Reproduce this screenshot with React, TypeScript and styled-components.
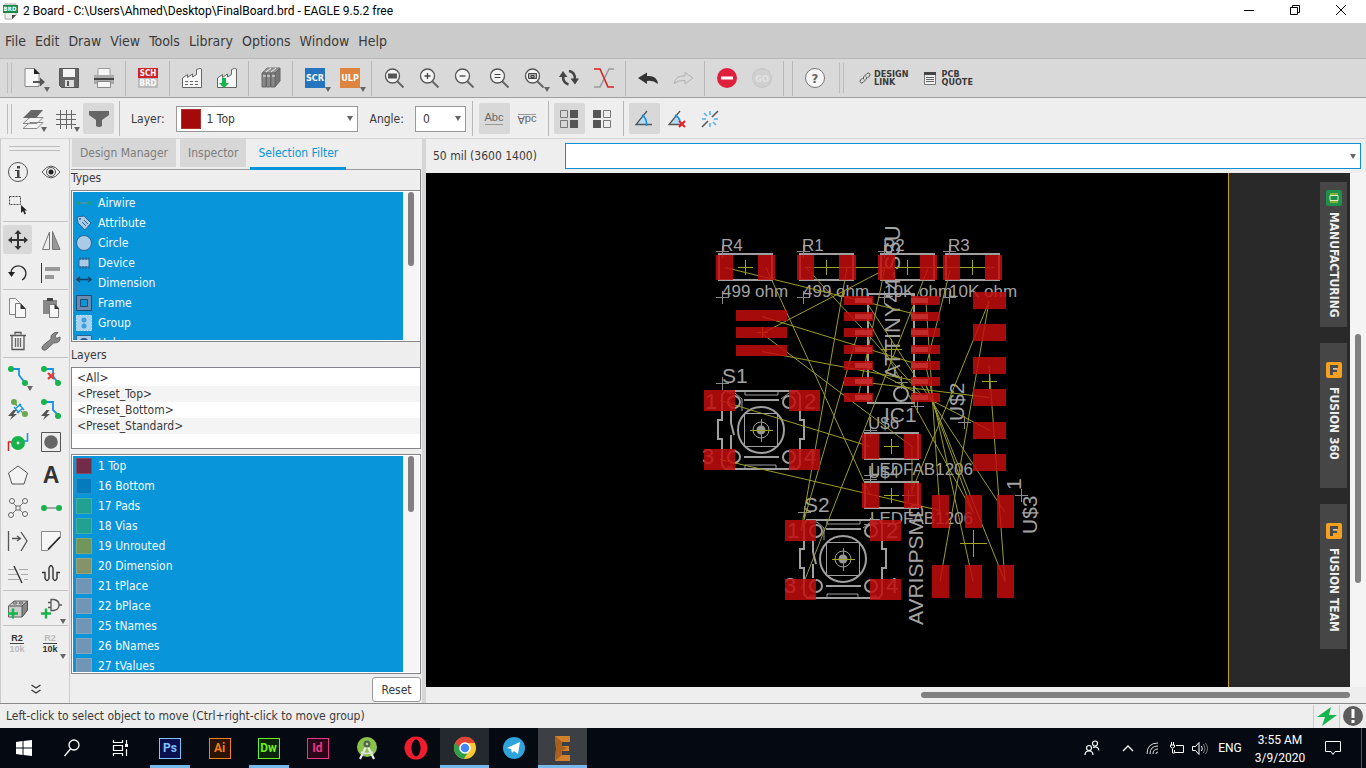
import React from "react";
import styled, { createGlobalStyle } from "styled-components";

const UI = '"DejaVu Sans Condensed", "DejaVu Sans", sans-serif';
const WIN = 'Roboto, "Noto Sans", sans-serif';

const Global = createGlobalStyle`
  * { box-sizing: border-box; }
  body { margin: 0; background: #eee; font-family: ${UI}; font-size: 12px; color: #3a3a3a; overflow: hidden; }
  button, input, select { font: inherit; color: inherit; }
  svg { display: block; flex: none; }
`;

/* ---------- icons (24 x 24 grid) ---------- */

const magnifier = (inner: React.ReactNode) => (
  <>
    <path d="M15.5 15.5 21.5 21.5" stroke="#666" strokeWidth="2" />
    <circle cx="10.5" cy="10" r="7" fill="#f4f4f4" stroke="#555" strokeWidth="1.3" />
    {inner}
  </>
);

const factory = (extra: React.ReactNode) => (
  <>
    <path d="M2.5 21.5V12l5-3.500v3l5-3.500v3l4-2.500V3.500q4-2 5-.500V21.500Z" fill="#f6f6f6" stroke="#666" />
    {extra}
  </>
);

const dot = (x: number, y: number, c = "#17b34b") => <circle cx={x} cy={y} r="3" fill={c} />;

const bolt = <path d="M7.5 13 2 19h4l-2 4 7-6H7.500l3-4Z" fill="#555" />;

const valueText = (top: string, bottom: string) => (
  <>
    <text x="11" y="9" fontSize="9" fontWeight="700" textAnchor="middle" fill={top} fontFamily="Liberation Sans, sans-serif">R2</text>
    <path d="M4 11.5h14" stroke="#444" />
    <text x="11" y="20" fontSize="9" fontWeight="700" textAnchor="middle" fill={bottom} fontFamily="Liberation Sans, sans-serif">10k</text>
  </>
);

const icons: Record<string, React.ReactNode> = {
  open: (
    <>
      <path d="M3 2.5h9l5 5v13H3Z" fill="#f6f6f6" stroke="#888" />
      <path d="M12 2v6h6Z" fill="#222" />
      <path d="M11 15h7v-3.500l5 4.500-5 4.500V17h-7Z" fill="#555" />
    </>
  ),
  save: (
    <>
      <path d="M2.5 2.5h19v19h-17l-2-2Z" fill="#666" stroke="#555" />
      <path d="M6 3h12v8H6Z" fill="#f4f4f4" />
      <path d="M8 14h9v7H8Z" fill="#ddd" />
      <path d="M10 15h2v5h-2Z" fill="#555" />
    </>
  ),
  print: (
    <>
      <path d="M6 2.5h12v7H6Z" fill="#f6f6f6" stroke="#999" />
      <path d="M2 9h20v9H2Z" fill="#aaa" />
      <path d="M2 12h20v2H2Z" fill="#444" />
      <path d="M5.500 15.500h13v6h-13Z" fill="#f6f6f6" stroke="#888" />
    </>
  ),
  sch: (
    <>
      <path d="M2 2h20v10H2Z" fill="#cf2127" />
      <path d="M2 12h20v10H2Z" fill="#bbb" />
      <text x="12" y="10" fontSize="8" fontWeight="700" textAnchor="middle" fill="#fff" fontFamily={UI}>SCH</text>
      <text x="12" y="20" fontSize="8" fontWeight="700" textAnchor="middle" fill="#fff" fontFamily={UI}>BRD</text>
    </>
  ),
  factory: factory(<path d="M5 15.5h13M5 18.5h13" stroke="#666" strokeDasharray="3 2" />),
  factoryDown: factory(<path d="M7 12h4v5h3l-5 5-5-5h3Z" fill="#17b34b" />),
  books: (
    <>
      <path d="M3 7 8 2h13l-5 5Z" fill="#999" stroke="#777" />
      <path d="M16 7l5-5v13l-5 6Z" fill="#777" stroke="#666" />
      <path d="M3 7h4v14H3ZM7.5 7h4v14h-4ZM12 7h4v14h-4Z" fill="#888" stroke="#666" />
      <path d="M4 10h3M8 10h3M13 10h3M7 6l5-4M12 6l5-4" stroke="#eee" />
    </>
  ),
  scr: (
    <>
      <path d="M2 2h20v20H2Z" fill="#2673c0" />
      <text x="12" y="15" fontSize="9" fontWeight="700" textAnchor="middle" fill="#fff" fontFamily={UI}>SCR</text>
    </>
  ),
  ulp: (
    <>
      <path d="M2 2h20v20H2Z" fill="#dd8440" />
      <text x="12" y="15" fontSize="9" fontWeight="700" textAnchor="middle" fill="#fff" fontFamily={UI}>ULP</text>
    </>
  ),
  zoomFit: magnifier(<path d="M6 7.5h9v5H6Z" fill="#555" />),
  zoomIn: magnifier(<path d="M7.5 10h6M10.5 7v6" stroke="#444" strokeWidth="1.3" />),
  zoomOut: magnifier(<path d="M7.5 10h6" stroke="#444" strokeWidth="1.3" />),
  zoomEq: magnifier(<path d="M7.5 8.500h6M7.500 11.500h6" stroke="#444" />),
  zoomSel: magnifier(<path d="M6.5 7.500h8v5h-8ZM9 9.500h3v2H9Z" fill="#aaa" stroke="#444" />),
  refresh: (
    <>
      <path d="M6 10q0 7 5.500 8.500M18 13q0-7-6-8" fill="none" stroke="#444" strokeWidth="2.6" />
      <path d="M2 11l4-6 4.500 6ZM13.500 12.500H22l-4 6Z" fill="#444" />
    </>
  ),
  ratsnest: (
    <>
      <path d="M22 3h-5L8 21H2" fill="none" stroke="#999" strokeWidth="1.6" />
      <path d="M2 3h6l8 18h6" fill="none" stroke="#d8241f" strokeWidth="1.6" />
    </>
  ),
  undo: <path d="M2 12l9-5.500v3.500q10-1 11 8-5-4-11-3v3Z" fill="#333" />,
  redo: <path d="M22 12l-8-5.500v3.500Q5 9 3 17.500 7 14 14 14.500v3.500Z" fill="none" stroke="#b0b0b0" />,
  stop: (
    <>
      <circle cx="12" cy="12" r="10" fill="#e01f3d" />
      <path d="M6 10.5h12v3H6Z" fill="#fff" />
    </>
  ),
  go: (
    <>
      <circle cx="12" cy="12" r="9.5" fill="#d0d0d0" stroke="#c5c5c5" />
      <text x="12" y="15.5" fontSize="9" fontWeight="700" textAnchor="middle" fill="#e2e2e2" fontFamily={UI}>GO</text>
    </>
  ),
  help: (
    <>
      <circle cx="12" cy="12" r="9.5" fill="#f5f5f5" stroke="#777" />
      <text x="12" y="17" fontSize="13" fontWeight="700" textAnchor="middle" fill="#666" fontFamily={UI}>?</text>
    </>
  ),
  layers: (
    <>
      <path d="M2 21.500l7-6h13l-6 6ZM2 16.500l7-6h13l-6 6Z" fill="#f4f4f4" stroke="#888" />
      <path d="M2 11l8-8h12l-7 8Z" fill="#666" />
    </>
  ),
  grid: <path d="M6.5 3v19M12.5 3v19M17.5 3v19M2 7.500h20M2 12.500h20M2 17.500h20" stroke="#666" />,
  filter: <path d="M2 4h20v4l-7 5v6q-3 2-6 0v-6L2 8Z" fill="#666" />,
  abc: (
    <>
      <text x="12" y="14" fontSize="11" textAnchor="middle" fill="#666" fontFamily="Liberation Sans, sans-serif">Abc</text>
      <path d="M3 17.5h18" stroke="#999" />
    </>
  ),
  abcFlip: (
    <>
      <text x="12" y="-9" transform="scale(1 -1)" fontSize="11" textAnchor="middle" fill="#666" fontFamily="Liberation Sans, sans-serif">Abc</text>
      <path d="M3 7.5h18" stroke="#999" />
    </>
  ),
  dotsRight: (
    <>
      <path d="M3.5 3.500h7v7h-7ZM3.500 13.500h7v7h-7Z" fill="none" stroke="#777" />
      <path d="M13 3h8v8h-8ZM13 13h8v8h-8Z" fill="#555" />
    </>
  ),
  dotsLeft: (
    <>
      <path d="M13.5 3.500h7v7h-7ZM13.500 13.500h7v7h-7Z" fill="none" stroke="#777" />
      <path d="M3 3h8v8H3ZM3 13h8v8H3Z" fill="#555" />
    </>
  ),
  angle: (
    <>
      <path d="M4 17 12 8q4 4 3 9Z" fill="#b5dcf6" />
      <path d="M20 17.500H4L15 4" fill="none" stroke="#555" strokeWidth="1.3" />
      <path d="M10 8q5 3 4.500 11" fill="none" stroke="#1492e6" strokeWidth="1.6" />
    </>
  ),
  angleOff: (
    <>
      <path d="M4 17 11 8q4 4 3 9Z" fill="#b5dcf6" />
      <path d="M16 17.500H4L15 4" fill="none" stroke="#555" strokeWidth="1.3" />
      <path d="M10 8q4 2 5 6" fill="none" stroke="#1492e6" strokeWidth="1.5" />
      <path d="m14 14 6 6m0-6-6 6" stroke="#e31e24" strokeWidth="2" />
    </>
  ),
  spark: (
    <>
      <path d="M4 20l6-6M14 10l6-6" stroke="#555" strokeWidth="1.5" />
      <path d="M12 4v4M12 16v4M4 12h4M16 12h4M6 6l3 3M15 15l3 3" stroke="#4fb1ee" strokeWidth="1.5" />
    </>
  ),
  info: (
    <>
      <circle cx="12" cy="12" r="9.5" fill="none" stroke="#555" />
      <path d="M11 6h3v2.500h-3ZM9 10h4.500v7H15v1H9v-1h2v-6H9Z" fill="#444" />
    </>
  ),
  eye: (
    <>
      <path d="M3 12q9-12 18 0-9 12-18 0Z" fill="none" stroke="#555" />
      <circle cx="12" cy="12" r="4.5" fill="none" stroke="#555" />
      <circle cx="12" cy="12" r="2.5" fill="#222" />
    </>
  ),
  group: (
    <>
      <path d="M3.5 3.500h11v8h-11Z" fill="none" stroke="#444" strokeDasharray="2 1" />
      <path d="M15 12v8l2-2 1.500 3.500 1.500-1-1.500-3H21Z" fill="#222" />
    </>
  ),
  move: <path d="M12 2l3.500 4H13v5h5V8.500l4 3.500-4 3.500V13h-5v5h2.500L12 22l-3.500-4H11v-5H6v2.500L2 12l4-3.500V11h5V6H8.500Z" fill="#333" />,
  mirror: (
    <>
      <path d="M3.5 21.500 10.500 4v17.500Z" fill="none" stroke="#777" />
      <path d="M13.500 21.500V3.500l7.500 18Z" fill="#999" stroke="#777" />
    </>
  ),
  rotate: (
    <>
      <path d="M5 11a7.5 7.5 0 1 1 11 8" fill="none" stroke="#333" strokeWidth="1.4" />
      <path d="M2 11h7l-3.500 5Z" fill="#222" />
    </>
  ),
  align: (
    <>
      <path d="M2.5 2v20" stroke="#333" />
      <path d="M6 6h15v4H6ZM6 14h9v4H6Z" fill="#999" />
    </>
  ),
  copy: (
    <>
      <path d="M3.5 2.500h6l4 4v12h-10Z" fill="#f6f6f6" stroke="#888" />
      <path d="M9.5 7.500h5l5 5v9h-10Z" fill="#f6f6f6" stroke="#777" />
      <path d="M14.5 7v6h5Z" fill="#333" />
    </>
  ),
  paste: (
    <>
      <path d="M4 4h14v14H4Z" fill="#888" />
      <path d="M8 2h6v3H8Z" fill="#444" />
      <path d="M10.5 8.500h6l3 4v9h-9Z" fill="#f6f6f6" stroke="#777" />
      <path d="M15.5 8v5h5Z" fill="#333" />
    </>
  ),
  trash: (
    <>
      <path d="M4 6.500h16M9 5.500V3.500h6v2M6 7v13.500h12V7" fill="none" stroke="#555" strokeWidth="1.3" />
      <path d="M9.500 9v9M12 9v9M14.500 9v9" stroke="#666" strokeWidth="1.3" />
    </>
  ),
  wrench: <path d="M3.5 20.500q-1.500-2 .5-4l8-6.500q-1-4 3-6 2-1 4-.5l-3 3.500 1.500 2.500L21 8q1 6-6.500 6l-7 6.500q-2 1.500-4 0Z" fill="#888" stroke="#666" />,
  route: <><path d="M5 5h8v6l6 8" fill="none" stroke="#1492e6" strokeWidth="1.8" />{dot(5, 5)}{dot(19, 19)}</>,
  ripup: (
    <>
      <path d="M5 5h9v7l5 7" fill="none" stroke="#1492e6" strokeWidth="1.8" />{dot(5, 5)}{dot(19, 19)}
      <path d="m9 9 6 6m0-6-6 6" stroke="#e53935" strokeWidth="2.2" />
    </>
  ),
  multi: (
    <>
      <path d="m8 5 3 4M15 14l4 4" stroke="#6aa84f" strokeWidth="1.5" />
      <path d="M9 12l6-5M11 16l6-5M8 10l5 6M13 7l5 6" stroke="#1492e6" strokeWidth="1.3" />
      {dot(8, 5, "#6aa84f")}{dot(19, 17, "#6aa84f")}{bolt}
    </>
  ),
  autoroute: <><path d="M5 5h9v8l5 5" fill="none" stroke="#1492e6" strokeWidth="1.8" />{dot(5, 5)}{dot(19, 19)}{bolt}</>,
  via: (
    <>
      <path d="M2.500 21V12H9" fill="none" stroke="#c62828" strokeWidth="1.5" />
      <path d="M21.500 3v8H15" fill="none" stroke="#1492e6" strokeWidth="1.5" />
      <circle cx="12" cy="13" r="4.2" fill="none" stroke="#17b34b" strokeWidth="5.6" />
    </>
  ),
  hole: (
    <>
      <path d="M2.5 2.500h19v19h-19Z" fill="none" stroke="#555" />
      <circle cx="12" cy="12" r="6.800" fill="#666" />
    </>
  ),
  polygon: <path d="M12 3l9.500 7-3.500 11H6L2.500 10Z" fill="#f4f4f4" stroke="#555" />,
  text: <text x="12" y="20" fontSize="23" fontWeight="700" textAnchor="middle" fill="#333" fontFamily="Liberation Sans, sans-serif">A</text>,
  net: (
    <>
      <path d="M5 5l14 14M5 19 19 5" stroke="#777" />
      {[[6, 5], [19, 5], [5, 19], [19, 18]].map(([x, y]) => <circle key={`${x}-${y}`} cx={x} cy={y} r="2.5" fill="#f4f4f4" stroke="#666" />)}
      <path d="M10 10h4v4h-4Z" fill="#f4f4f4" stroke="#666" />
    </>
  ),
  wire: <><path d="M4 12h16" stroke="#888" strokeWidth="1.5" />{dot(5, 12)}{dot(20, 12)}</>,
  split: <path d="M2.5 2v20M6 9.500h8M11 7l3.500 2.500L11 12M15 3l6 9-6 10" fill="none" stroke="#555" strokeWidth="1.3" />,
  miter: (
    <>
      <path d="M2.500 2.500h19V8L9 21.500H2.500Z" fill="#f6f6f6" stroke="#888" />
      <path d="M21 8 9 20.500" stroke="#222" strokeWidth="1.6" />
    </>
  ),
  slice: <><path d="M2 7.500h7M2 12.500h9M2 17.500h11M13 7.500h9M15 12.500h7M18 17.500h4" stroke="#aaa" /><path d="m8 4 8 17" stroke="#333" strokeWidth="1.4" /></>,
  meander: <path d="M3 10.500h3v6q2 4 4 0V6q2-5 4 0v10.500q2 4 4 0v-6h3" fill="none" stroke="#333" strokeWidth="1.4" />,
  addPart: (
    <>
      <path d="M2.5 9 8 4h13.500v9L16 20H2.500Z" fill="#ccc" stroke="#666" />
      <path d="M16 9l5.500-5v9L16 20ZM2.500 9H16" fill="#888" stroke="#555" />
      <ellipse cx="9" cy="6" rx="2" ry="1" fill="#eee" stroke="#555" /><ellipse cx="15" cy="6" rx="2" ry="1" fill="#eee" stroke="#555" />
      <path d="M2 16.500h10M7 11.500v10" stroke="#17b34b" strokeWidth="2.4" />
    </>
  ),
  addGate: (
    <>
      <path d="M12 2.500h3q5 1 5 5.500t-5 5.500h-3ZM9 5.500h3M9 10.500h3M20 8h3" fill="none" stroke="#555" strokeWidth="1.3" />
      <path d="M2 16.500h10M7 11.500v10" stroke="#17b34b" strokeWidth="2.4" />
    </>
  ),
  value: valueText("#333", "#bbb"),
  valueAlt: valueText("#bbb", "#333"),
};

const Icon = ({ name, size = 24 }: { name: string; size?: number }) => (
  <svg width={size} height={size} viewBox="0 0 24 24" aria-hidden="true">{icons[name]}</svg>
);

/* ---------- window frame ---------- */

const Shell = styled.div`
  height: 100vh;
  display: flex;
  flex-direction: column;
`;
const TitleBar = styled.header`
  flex: none;
  height: 23px;
  padding: 0 2px 0 1px;
  display: flex;
  align-items: center;
  background: #fff;
  color: #000;
  font: 12px/23px ${WIN};
`;
const Title = styled.h1`
  margin: 0 auto 0 5px;
  font: inherit;
`;
const WindowButton = styled.button`
  width: 46px;
  height: 23px;
  padding: 0 0 3px;
  border: 0;
  background: none;
  display: grid;
  place-items: center;
`;
const MenuBar = styled.nav`
  flex: none;
  height: 36px;
  padding-left: 5px;
  display: flex;
  align-items: center;
  gap: 9px;
  background: #cbcbcb;
  border-bottom: 1px solid #b7b7b7;
`;
const MenuItem = styled.button`
  border: 0;
  padding: 0;
  background: none;
  font-size: 14px;
`;

/* ---------- toolbars ---------- */

const MainTools = styled.div`
  flex: none;
  height: 39px;
  display: flex;
  align-items: center;
  background: #d9d9d9;
  border-bottom: 1px solid #9d9d9d;
`;
const OptionTools = styled.div`
  flex: none;
  height: 41px;
  padding-top: 1px;
  display: flex;
  align-items: center;
  gap: 2px;
  border-bottom: 1px solid #d4d4d4;
`;
const Handle = styled.span<{ $after: number }>`
  width: 5px;
  height: 30px;
  margin: 0 ${(p) => p.$after}px 0 7px;
  border: solid #bdbdbd;
  border-width: 0 1px;
`;
const Rule = styled.span<{ $w?: number }>`
  width: ${(p) => p.$w ?? 9}px;
  height: 35px;
  display: flex;
  justify-content: center;
  &::before { content: ""; width: 1px; background: #b8b8b8; }
`;
const ToolButton = styled.button<{ $w?: number; $on?: boolean; $menu?: boolean }>`
  position: relative;
  flex: none;
  width: ${(p) => p.$w ?? 35}px;
  height: 31px;
  padding: 0;
  border: 0;
  border-radius: 2px;
  background: ${(p) => (p.$on ? "#d8d8d8" : "none")};
  display: grid;
  place-items: center;
  &::after {
    content: "";
    display: ${(p) => (p.$menu ? "block" : "none")};
    position: absolute;
    right: 1px;
    bottom: 2px;
    border: 3px solid transparent;
    border-top: 5px solid #666;
    border-bottom: 0;
  }
`;
const LinkTool = styled.button`
  margin-left: 15px;
  padding: 0;
  border: 0;
  background: none;
  display: flex;
  align-items: center;
  gap: 3px;
  font-size: 9px;
  line-height: 8px;
  font-weight: 600;
  text-align: left;
`;
const FieldLabel = styled.label<{ $l: number; $r: number }>`
  margin: 0 ${(p) => p.$r}px 0 ${(p) => p.$l}px;
`;
const SelectBox = styled.div<{ $w: number }>`
  flex: none;
  width: ${(p) => p.$w}px;
  height: 26px;
  padding: 0 4px;
  display: flex;
  align-items: center;
  background: #fff;
  border: 1px solid #999;
  select { flex: 1; min-width: 0; height: 24px; padding: 0 0 0 3px; border: 0; background: none; appearance: none; outline: 0; }
  span + select { padding-left: 6px; }
`;
const Swatch = styled.span<{ $c: string; $size?: number }>`
  flex: none;
  width: ${(p) => p.$size ?? 16}px;
  height: ${(p) => p.$size ?? 16}px;
  background: ${(p) => p.$c};
  border: 1px solid rgba(255, 255, 255, 0.15);
`;
const Caret = styled.span`
  flex: none;
  border: 3px solid transparent;
  border-top: 5px solid #666;
  border-bottom: 0;
`;

/* ---------- left tool column and filter panel ---------- */

const Body = styled.main`
  flex: 1;
  min-height: 0;
  display: flex;
`;
const ToolColumn = styled.aside`
  flex: none;
  width: 70px;
  padding: 7px 1px 0 2px;
  border-left: 1px solid #ccc;
  border-right: 1px solid #ccc;
  display: flex;
  flex-direction: column;
`;
const ColumnHandle = styled.span`
  height: 5px;
  margin: 0 8px 4px 6px;
  border: solid #bdbdbd;
  border-width: 1px 0;
`;
const ToolGroup = styled.div`
  display: grid;
  grid-template-columns: 33px 33px;
  grid-auto-rows: 33px;
  & + & { border-top: 1px solid #c4c4c4; padding-top: 1px; }
`;
const PadButton = styled(ToolButton)`
  width: 29px;
  height: 29px;
  margin: 2px 0;
  &::after { right: -1px; bottom: -1px; }
`;
const More = styled.button`
  margin: auto 0 8px;
  padding: 0;
  border: 0;
  background: none;
  display: grid;
  place-items: center;
`;
const Panel = styled.section`
  flex: none;
  width: 352px;
  padding: 0 1px;
  display: flex;
  flex-direction: column;
`;
const Tabs = styled.div`
  flex: none;
  height: 31px;
  padding-left: 1px;
  display: flex;
  gap: 4px;
  border-bottom: 1px solid #999;
`;
const Tab = styled.button<{ $on?: boolean }>`
  height: 31px;
  padding: 0 8px;
  border: 0;
  border-bottom: 3px solid ${(p) => (p.$on ? "#0895d9" : "transparent")};
  background: ${(p) => (p.$on ? "#eee" : "#d7d7d7")};
  background-clip: padding-box;
  color: ${(p) => (p.$on ? "#0895d9" : "#7d7d7d")};
`;
const Caption = styled.h2<{ $h: number }>`
  flex: none;
  height: ${(p) => p.$h}px;
  margin: 0;
  font: 12px/17px ${UI};
  padding-top: ${(p) => (p.$h > 20 ? 5 : 0)}px;
  border-right: 1px solid #888;
`;
const ListFrame = styled.div<{ $grow: number }>`
  flex: ${(p) => p.$grow} 1 0;
  min-height: 0;
  padding: 1px;
  display: flex;
  background: #fff;
  border: 1px solid #85868c;
`;
const BlueList = styled.ul`
  flex: 1;
  margin: 0;
  padding: 0;
  list-style: none;
  overflow: hidden;
  background: #0895d9;
  color: #f4faff;
`;
const BlueItem = styled.li`
  height: 20px;
  padding: 1px 0 0 3px;
  display: flex;
  align-items: center;
  gap: 6px;
`;
const Track = styled.div`
  width: 16px;
  padding-left: 5px;
  background: #f5f5f5;
`;
const Thumb = styled.div<{ $h: string }>`
  width: 6px;
  height: ${(p) => p.$h};
  border-radius: 3px;
  background: #808080;
`;
const PresetList = styled.ul`
  flex: none;
  height: 82px;
  margin: 0 0 5px;
  padding: 2px 0 0;
  list-style: none;
  background: #fff;
  border: 1px solid #85868c;
  li { height: 16px; padding-left: 5px; line-height: 16px; }
  li:nth-child(even) { background: #f4f4f4; }
`;
const PanelFoot = styled.div`
  flex: none;
  height: 29px;
  display: flex;
  justify-content: flex-end;
  padding: 3px 0 0;
`;
const ResetButton = styled.button`
  width: 49px;
  height: 25px;
  padding: 0;
  border: 1px solid #999;
  border-radius: 3px;
  background: #fff;
`;

/* ---------- board area ---------- */

const Work = styled.section`
  flex: 1;
  min-width: 0;
  border-left: 4px solid #d6d6d6;
  display: flex;
  flex-direction: column;
`;
const CommandRow = styled.div`
  flex: none;
  height: 34px;
  padding: 0 5px 0 7px;
  display: flex;
  align-items: center;
`;
const Coordinates = styled.label`
  width: 132px;
  white-space: nowrap;
`;
const CommandBox = styled.div`
  flex: 1;
  height: 26px;
  padding-right: 4px;
  display: flex;
  align-items: center;
  background: #fff;
  border: 1px solid #0e90d2;
  input { flex: 1; min-width: 0; height: 22px; border: 0; outline: 0; background: none; }
`;
const Viewport = styled.div`
  flex: 1;
  min-height: 0;
  display: flex;
  background: #f4f4f4;
`;
const Board = styled.div`
  flex: 1;
  min-width: 0;
  overflow: hidden;
  background: #000;
  border-right: 1px solid #c79a2a;
`;
const OffBoard = styled.div`
  flex: none;
  width: 121px;
  padding: 9px 3px 0 0;
  display: flex;
  flex-direction: column;
  align-items: flex-end;
  gap: 16px;
  background: #292929;
`;
const SideTab = styled.button<{ $wide?: boolean }>`
  width: 27px;
  height: 145px;
  padding: ${(p) => (p.$wide ? 19 : 8)}px 0 0;
  border: 0;
  background: #464646;
  color: #eee;
  display: flex;
  flex-direction: column;
  align-items: center;
  gap: ${(p) => (p.$wide ? 9 : 6)}px;
  span { writing-mode: vertical-rl; font-size: 12px; font-weight: 700; line-height: 16px; white-space: nowrap; }
`;
const VTrack = styled.div`
  flex: none;
  width: 16px;
  padding: 161px 5px 0;
`;
const HTrack = styled.div`
  flex: none;
  height: 16px;
  padding: 5px 16px 0 0;
  display: flex;
  &::before { content: ""; flex: 495; }
  div { flex: 429; height: 6px; border-radius: 3px; background: #808080; }
`;

/* ---------- status bar and taskbar ---------- */

const StatusBar = styled.footer`
  flex: none;
  height: 25px;
  padding: 0 1px 0 6px;
  display: flex;
  align-items: center;
  border-top: 1px solid #888;
  p { margin: 0 auto 0 0; }
`;
const StatusIcon = styled.span`
  width: 26px;
  height: 23px;
  display: grid;
  place-items: center;
  border-left: 1px solid #ccc;
`;
const TaskBar = styled.nav`
  flex: none;
  height: 40px;
  display: flex;
  background: #050a12;
  color: #fff;
  font: 12px/18px ${WIN};
`;
const Task = styled.button<{ $w?: number; $bg?: string; $line?: string }>`
  flex: none;
  width: ${(p) => p.$w ?? 49}px;
  height: 40px;
  padding: 0;
  border: 0;
  background: ${(p) => p.$bg ?? "none"};
  display: flex;
  flex-direction: column;
  align-items: center;
  justify-content: center;
  position: relative;
  &::after { content: ""; position: absolute; bottom: 0; width: ${(p) => p.$line ?? "0"}; height: 3px; background: #76b9ed; }
`;
const Spring = styled.span`
  flex: 1;
`;
const AdobeTile = styled.span<{ $c: string; $bg: string }>`
  width: 22px;
  height: 21px;
  border: 1px solid ${(p) => p.$c};
  background: ${(p) => p.$bg};
  color: ${(p) => p.$c};
  font-weight: 700;
  font-size: 12px;
  line-height: 18px;
`;
const Clock = styled.button`
  width: 62px;
  padding: 1px 0 0;
  border: 0;
  background: none;
  text-align: center;
`;
const DesktopEdge = styled.span`
  width: 5px;
  border-left: 1px solid #555a60;
`;

/* ---------- board drawing ---------- */

const Pads = ({ at, w, h }: { at: number[][]; w: number; h: number }) => (
  <g fill="#c20d0d" fillOpacity="0.85">{at.map(([x, y]) => <rect key={`${x}-${y}`} x={x} y={y} width={w} height={h} />)}</g>
);
/* centred on the half pixel so that its one-pixel arms stay sharp */
const Plus = ({ x, y, r = 7, c = "#a3a31f" }: { x: number; y: number; r?: number; c?: string }) => (
  <path d={`M${x - r} ${y + 0.5}h${2 * r + 1}M${x + 0.5} ${y - r}v${2 * r + 1}`} stroke={c} />
);
const Mark = ({ x, y }: { x: number; y: number }) => <Plus x={x} y={y} r={6} c="#8a8a8a" />;

const Label = ({ x, y, s = 21, up, children }: { x: number; y: number; s?: number; up?: boolean; children: string }) => (
  <text x={up ? 0 : x} y={up ? 0 : y} transform={up ? `translate(${x} ${y}) rotate(-90)` : undefined} fontSize={s} fill="#a3a3a3">{children}</text>
);

const Chip1206 = ({ x, y }: { x: number; y: number }) => (
  <>
    <rect x={x + 3} y={y} width="53" height="26" fill="none" stroke="#a0a0a0" strokeWidth="2" />
    <Plus x={x + 29} y={y + 13} />
  </>
);

const Switch = ({ x, y, name }: { x: number; y: number; name: string }) => (
  <g transform={`translate(${x} ${y})`}>
    <g fill="none" stroke="#a0a0a0" strokeWidth="2">
      <path d="M-36-39h72l3 4v25h4v19h-4v26l-3 4h-72l-3-4V9h-4v-19h4v-25Z" />
      <circle r="23" />
      <path d="M-17-30h35M-17 27h35M-30-19v12l3 12M-30 5v14" />
      <circle cx="-27" cy="-28" r="6" /><circle cx="28" cy="-28" r="6" />
      <circle cx="-27" cy="27" r="6" /><circle cx="28" cy="27" r="6" />
      <path d="M-16.5-16.500h33v33h-33ZM-16-39v4h33v-4M-16 39v-4h31v4" strokeWidth="1" />
      <circle r="8" strokeWidth="1" />
    </g>
    <path d="M-34-37h8l7 6v12M34-37h-6l-8 6M-34 37h6M34 37l-6 0" fill="none" stroke="#a0a0a0" />
    <circle r="4.500" fill="#999" />
    <Plus x={0} y={0} r={11} />
    <Label x={-56} y={-21} s={22}>1</Label><Label x={43} y={-21} s={22}>2</Label>
    <Label x={-59} y={34} s={22}>3</Label><Label x={43} y={34} s={22}>4</Label>
    <Label x={-39} y={-47}>{name}</Label>
    <Mark x={-39} y={-47} />
  </g>
);

const airwires = [
  [725, 267, 925, 316], [766, 267, 870, 494], [805, 267, 994, 267], [806, 267, 866, 332], [847, 267, 801, 530],
  [762, 333, 885, 269], [762, 316, 925, 366], [762, 351, 925, 382], [762, 333, 912, 446], [720, 400, 870, 446],
  [720, 459, 940, 510], [858, 332, 801, 530], [928, 268, 801, 589], [885, 267, 858, 397], [950, 270, 926, 366],
  [989, 301, 912, 490], [989, 301, 940, 581], [866, 382, 989, 397], [989, 365, 1005, 581], [990, 430, 866, 366],
  [912, 446, 912, 494], [866, 301, 1005, 512], [925, 382, 973, 512], [925, 382, 1005, 581], [926, 366, 973, 581],
  [926, 301, 940, 512], [866, 316, 973, 512], [866, 332, 925, 398],
];
const resistors: [number, string, string][] = [[716, "R4", "499 ohm"], [797, "R1", "499 ohm"], [878, "R2", "10K ohm"], [943, "R3", "10K ohm"]];
const icRows = [296, 312, 328, 345, 361, 377, 393];

const BoardDrawing = () => (
  <svg width="802" height="514" viewBox="426 173 802 514" fontFamily="Liberation Sans, Arial, sans-serif" role="img" aria-label="Circuit board">
    {resistors.map(([x, name, value]) => (
      <g key={name}>
        <Chip1206 x={x} y={254} />
        <Mark x={x + 6} y={251} /><Mark x={x + 6} y={297} />
        <Label x={x + 5} y={251} s={17}>{name}</Label>
        <Label x={x + 6} y={297} s={17}>{value}</Label>
      </g>
    ))}
    {[433, 482].map((y, i) => (
      <g key={y}>
        <Chip1206 x={862} y={y} />
        <Mark x={870} y={y - 3} />
        <Mark x={870} y={y + 42} />
        <Label x={868} y={y - 4} s={17}>{i ? "U$4" : "U$6"}</Label>
        <Label x={870} y={y + 42} s={17}>LEDFAB1206</Label>
      </g>
    ))}
    <rect x="868" y="294" width="46" height="109" fill="none" stroke="#a0a0a0" strokeWidth="2" />
    <circle cx="901" cy="394" r="7" fill="none" stroke="#a0a0a0" strokeWidth="2" />
    <Label x={900} y={379} s={22} up>ATTINY44-SSU</Label>
    <Label x={884} y={422}>IC1</Label>
    <Label x={964} y={421} up>U$2</Label>
    <Label x={923} y={625} up>AVRISPSMD</Label>
    <Label x={1037} y={534} up>U$3</Label>
    <Label x={1021} y={490} up>1</Label>
    <Mark x={917} y={406} /><Mark x={964} y={422} /><Mark x={901} y={382} /><Mark x={1021} y={495} /><Mark x={908} y={495} />
    <Switch x={761} y={430} name="S1" />
    <Switch x={843} y={559} name="S2" />
    <g stroke="#9c9c2a" fill="none">{airwires.map((w) => <path key={w.join()} d={`M${w[0]} ${w[1] + 0.5}L${w[2]} ${w[3] + 0.5}`} />)}</g>
    <Plus x={762} y={332} r={5} /><Plus x={891} y={349} r={10} /><Plus x={989} y={381} /><Plus x={973} y={543} r={13} />
    <g shapeRendering="crispEdges">
      <Pads w={17} h={25} at={resistors.flatMap(([x]) => [[x, 255], [x + 42, 255]])} />
      <Pads w={17} h={25} at={[[862, 434], [904, 434], [862, 483], [904, 483]]} />
      <Pads w={51} h={11} at={[[736, 310], [736, 327], [736, 345]]} />
      <Pads w={29} h={9} at={icRows.flatMap((y) => [[844, y], [911, y]])} />
      <g fill="#c32b2b">{icRows.map((y) => <path key={y} d={`M855 ${y + 2}h17v5h-17ZM911 ${y + 2}h17v5h-17Z`} />)}</g>
      <Pads w={33} h={17} at={[292, 324, 357, 389, 422, 454].map((y) => [973, y])} />
      <Pads w={17} h={33} at={[932, 965, 997].flatMap((x) => [[x, 495], [x, 565]])} />
      <Pads w={31} h={21} at={[[704, 390], [789, 390], [704, 449], [789, 449], [785, 520], [870, 520], [785, 579], [870, 579]]} />
    </g>
  </svg>
);

/* ---------- small item icons of the Types list ---------- */

const typeIcons: [string, React.ReactNode][] = [
  ["Airwire", <><path d="M3 8h10" stroke="#7d8fa5" /><circle cx="2.5" cy="8" r="2" fill="#17a07a" /><circle cx="13.5" cy="8" r="2" fill="#17a07a" /></>],
  ["Attribute", <><path d="M1 2l7-1 7 7-6 7-7-7Z" fill="#a9cbe8" stroke="#2a6593" /><path d="m6 7 4 4M8 5l4 4" stroke="#2a6593" /><circle cx="4" cy="4" r="1" fill="#2a6593" /></>],
  ["Circle", <circle cx="8" cy="8" r="7.5" fill="#a9cbe8" stroke="#2a6593" />],
  ["Device", <><path d="M3 4h10v8H3Z" fill="#a9cbe8" stroke="#2a6593" /><path d="M4 2v3m3-3v3m3-3v3m3-3v3M4 11v3m3-3v3m3-3v3m3-3v3" stroke="#2a6593" /></>],
  ["Dimension", <><path d="M.5 0v16M15.5 0v16" stroke="#3c7fae" /><path d="M1 4.500h14M4 2 1 4.500 4 7M12 2l3 2.500L12 7" fill="none" stroke="#123f63" strokeWidth="1.3" /></>],
  ["Frame", <><path d="M.5.5h15v15H.5Z" fill="#6b8caf" stroke="#1f4c73" /><path d="M4.5 4.500h7v7h-7Z" fill="#0895d9" stroke="#1f4c73" /></>],
  ["Group", <><path d="M.5.5h15v15H.5Z" fill="#a9d2f0" stroke="#cde6f8" strokeDasharray="2 1" /><circle cx="8" cy="5" r="2.5" fill="#3aa0dd" /><circle cx="8" cy="11" r="2.5" fill="#3aa0dd" /></>],
  ["Hole", <><path d="M.5.5h15v15H.5Z" fill="#a9cbe8" stroke="#2a6593" /><circle cx="8" cy="8" r="5" fill="#2a5a85" /></>],
];
const layerRows: [string, string][] = [
  ["1 Top", "#722b49"], ["16 Bottom", "#037bbd"], ["17 Pads", "#22a092"], ["18 Vias", "#22a092"], ["19 Unrouted", "#709759"],
  ["20 Dimension", "#859468"], ["21 tPlace", "#7195b5"], ["22 bPlace", "#7195b5"], ["25 tNames", "#7195b5"], ["26 bNames", "#7195b5"], ["27 tValues", "#7195b5"],
];
/* a trailing * marks a tool with a drop-down, ! the active tool, and | is a separator */
const mainTools = ["open*", "save", "print", "|", "sch", "|", "factory", "factoryDown", "|", "books", "|", "scr*", "ulp*", "|", "zoomFit", "zoomIn", "zoomOut", "zoomEq", "zoomSel*", "refresh", "ratsnest", "|", "undo", "redo", "|", "stop", "go"];
const padTools = [
  ["info", "eye", "group"], ["move!", "mirror", "rotate", "align"], ["copy", "paste", "trash", "wrench"],
  ["route*", "ripup", "multi", "autoroute", "via", "hole", "polygon", "text", "net", "wire", "split", "miter", "slice", "meander"],
  ["addPart", "addGate*"], ["value", "valueAlt*"],
];
const clean = (s: string) => s.replace(/[*!]/, "");

const FusionMark = () => (
  <svg width="16" height="16" viewBox="0 0 16 16" aria-hidden="true">
    <rect width="16" height="16" rx="2" fill="#f5a01e" />
    <path d="M4 3h8v3H7v1.500h4V10H7v3H4Z" fill="#4a4a4a" /><path d="M7 6h4v1.500H7Z" fill="#ccc" />
  </svg>
);

export default function App() {
  return (
    <Shell>
      <Global />
      <TitleBar>
        <svg width="17" height="17" viewBox="0 0 17 17" aria-hidden="true">
          <path d="M4 1h11v11l-4 4H4Z" fill="#eee" stroke="#aaa" /><path d="M15 12h-4v4Z" fill="#444" />
          <path d="M2 2h15v8H2Z" fill="#188a43" />
          <text x="9" y="8" fontSize="6" fontWeight="700" textAnchor="middle" fill="#fff" fontFamily={UI}>BRD</text>
        </svg>
        <Title>2 Board - C:\Users\Ahmed\Desktop\FinalBoard.brd - EAGLE 9.5.2 free</Title>
        <WindowButton aria-label="Minimize"><svg width="10" height="10"><path d="M0 5.5h10" stroke="#000" /></svg></WindowButton>
        <WindowButton aria-label="Restore"><svg width="10" height="10"><path d="M.5 2.500h7v7h-7ZM2.500 2V.5h7v7H8" fill="none" stroke="#000" /></svg></WindowButton>
        <WindowButton aria-label="Close"><svg width="10" height="10"><path d="m0 0 10 10M10 0 0 10" stroke="#000" /></svg></WindowButton>
      </TitleBar>
      <MenuBar>
        {["File", "Edit", "Draw", "View", "Tools", "Library", "Options", "Window", "Help"].map((m) => <MenuItem key={m}>{m}</MenuItem>)}
      </MenuBar>
      <MainTools>
        <Handle $after={4} />
        {mainTools.map((t, i) => t === "|" ? <Rule key={i} /> : (
          <ToolButton key={i} aria-label={clean(t)} $menu={t.endsWith("*")}><Icon name={clean(t)} /></ToolButton>
        ))}
        <Rule /><Rule />
        <ToolButton aria-label="help"><Icon name="help" /></ToolButton>
        <Handle $after={0} />
        <LinkTool>
          <svg width="12" height="12" viewBox="0 0 12 12" fill="none" stroke="#555" aria-hidden="true">
            <path d="M5 7.500Q3.500 6 5 4.500L8 1.500q1.500-1 2.500 0t0 2.500L8.500 6M7 4.500q1.500 1 0 3l-3 3q-1.500 1-2.500 0t0-2.500L3.500 6" />
          </svg>
          <span>DESIGN<br />LINK</span>
        </LinkTool>
        <LinkTool>
          <svg width="15" height="13" viewBox="0 0 15 13" aria-hidden="true"><path d="M.5.5h11v12H.5Z" fill="#eee" stroke="#777" /><path d="M0 0h12v3H0Z" fill="#444" /><path d="M2 5.500h8M2 7.500h8M2 9.500h8" stroke="#666" /></svg>
          <span>PCB<br />QUOTE</span>
        </LinkTool>
      </MainTools>
      <OptionTools>
        <Handle $after={3} />
        <ToolButton $w={31} $menu aria-label="layers"><Icon name="layers" /></ToolButton>
        <ToolButton $w={31} $menu aria-label="grid"><Icon name="grid" /></ToolButton>
        <ToolButton $w={31} $on aria-label="filter"><Icon name="filter" /></ToolButton>
        <Rule $w={7} />
        <FieldLabel htmlFor="layer" $l={6} $r={9}>Layer:</FieldLabel>
        <SelectBox $w={182}>
          <Swatch $c="#a30b0b" $size={20} />
          <select id="layer"><option>1 Top</option></select>
          <Caret />
        </SelectBox>
        <FieldLabel htmlFor="angle" $l={10} $r={9}>Angle:</FieldLabel>
        <SelectBox $w={51}>
          <select id="angle"><option>0</option></select>
          <Caret />
        </SelectBox>
        <Rule />
        <ToolButton $w={31} $on aria-label="abc"><Icon name="abc" /></ToolButton>
        <ToolButton $w={31} aria-label="abc flipped"><Icon name="abcFlip" /></ToolButton>
        <Rule $w={7} />
        <ToolButton $w={31} $on aria-label="dots right"><Icon name="dotsRight" /></ToolButton>
        <ToolButton $w={31} aria-label="dots left"><Icon name="dotsLeft" /></ToolButton>
        <Rule $w={7} />
        <ToolButton $w={31} $on aria-label="angle"><Icon name="angle" /></ToolButton>
        <ToolButton $w={31} aria-label="angle off"><Icon name="angleOff" /></ToolButton>
        <ToolButton $w={31} aria-label="spark"><Icon name="spark" /></ToolButton>
      </OptionTools>
      <Body>
        <ToolColumn>
          <ColumnHandle />
          {padTools.map((g, i) => (
            <ToolGroup key={i}>
              {g.map((t) => <PadButton key={t} aria-label={clean(t)} $on={t.endsWith("!")} $menu={t.endsWith("*")}><Icon name={clean(t)} /></PadButton>)}
            </ToolGroup>
          ))}
          <More aria-label="More tools">
            <svg width="12" height="12" viewBox="0 0 12 12" fill="none" stroke="#333" strokeWidth="1.3"><path d="m1.500 2 4.500 3 4.500-3M1.500 7 6 10l4.500-3" /></svg>
          </More>
        </ToolColumn>
        <Panel>
          <Tabs>
            <Tab>Design Manager</Tab>
            <Tab>Inspector</Tab>
            <Tab $on>Selection Filter</Tab>
          </Tabs>
          <Caption $h={20}>Types</Caption>
          <ListFrame $grow={150}>
            <BlueList>
              {typeIcons.map(([name, art]) => (
                <BlueItem key={name}><svg width="16" height="16" viewBox="0 0 16 16" aria-hidden="true">{art}</svg>{name}</BlueItem>
              ))}
            </BlueList>
            <Track><Thumb $h="50%" /></Track>
          </ListFrame>
          <Caption $h={25}>Layers</Caption>
          <PresetList>
            {["<All>", "<Preset_Top>", "<Preset_Bottom>", "<Preset_Standard>"].map((p) => <li key={p}>{p}</li>)}
          </PresetList>
          <ListFrame $grow={220}>
            <BlueList>{layerRows.map(([name, c]) => <BlueItem key={name}><Swatch $c={c} />{name}</BlueItem>)}</BlueList>
            <Track><Thumb $h="26%" /></Track>
          </ListFrame>
          <PanelFoot><ResetButton>Reset</ResetButton></PanelFoot>
        </Panel>
        <Work>
          <CommandRow>
            <Coordinates htmlFor="command">50 mil (3600 1400)</Coordinates>
            <CommandBox><input id="command" type="text" /><Caret /></CommandBox>
          </CommandRow>
          <Viewport>
            <Board><BoardDrawing /></Board>
            <OffBoard>
              <SideTab>
                <svg width="16" height="16" viewBox="0 0 16 16" aria-hidden="true">
                  <rect width="16" height="16" rx="2" fill="#1f8f4c" /><path d="M5 3v10M7 3v10M9 3v10M11 3v10" stroke="#e8d42a" /><path d="M4 5.500h8v5H4Z" fill="#1f8f4c" stroke="#e8e8c0" />
                </svg>
                <span>MANUFACTURING</span>
              </SideTab>
              <SideTab $wide><FusionMark /><span>FUSION 360</span></SideTab>
              <SideTab $wide><FusionMark /><span>FUSION TEAM</span></SideTab>
            </OffBoard>
            <VTrack><Thumb $h="249px" /></VTrack>
          </Viewport>
          <HTrack><div /></HTrack>
        </Work>
      </Body>
      <StatusBar>
        <p>Left-click to select object to move (Ctrl+right-click to move group)</p>
        <StatusIcon><svg width="20" height="20" viewBox="0 0 20 20"><path d="M14 1 0 11h8L5 20 20 9h-8l2-8Z" fill="#17b34b" /></svg></StatusIcon>
        <StatusIcon><svg width="20" height="20" viewBox="0 0 20 20"><circle cx="10" cy="10" r="10" fill="#5c5c5c" /><path d="M8.5 3h3v9h-3ZM8.500 14h3v3h-3Z" fill="#fff" /></svg></StatusIcon>
      </StatusBar>
      <TaskBar>
        <Task $w={48} aria-label="Start"><svg width="16" height="16" viewBox="0 0 16 16"><path d="M0 2l6.500-1v6.500H0ZM7.500 1 16 0v7.500H7.500ZM0 8.500h6.500V15L0 14ZM7.500 8.500H16V16l-8.500-1Z" fill="#fff" /></svg></Task>
        <Task $w={48} aria-label="Search"><svg width="18" height="18" viewBox="0 0 18 18" fill="none" stroke="#fff" strokeWidth="1.3"><circle cx="11" cy="6" r="5" /><path d="m7.500 10-6 7" /></svg></Task>
        <Task $w={49} aria-label="Task view"><svg width="17" height="16" viewBox="0 0 17 16" fill="none" stroke="#fff" strokeWidth="1.2"><path d="M1.500 0v2.500h9V0M1.500 16v-2.500h9V16M1.500 5.500h9v5h-9ZM14.500 0v4M14.500 9v7" /><path d="M13 4h3v3h-3Z" fill="#fff" stroke="none" /></svg></Task>
        <Task $w={50} $line="40px"><AdobeTile $c="#7fc4ff" $bg="#0a0f4f">Ps</AdobeTile></Task>
        <Task><AdobeTile $c="#f57f17" $bg="#2b1404">Ai</AdobeTile></Task>
        <Task $line="40px"><AdobeTile $c="#6cf21d" $bg="#0c2407">Dw</AdobeTile></Task>
        <Task><AdobeTile $c="#e7378b" $bg="#2b0618">Id</AdobeTile></Task>
        <Task aria-label="Android Studio">
          <svg width="22" height="24" viewBox="0 0 22 24"><circle cx="11" cy="11" r="10" fill="#8bc34a" /><path d="m10 11-6 12M12 11l6 12" fill="none" stroke="#e8e8e8" strokeWidth="2.2" /><path d="M5 16q6 3 12 0" fill="none" stroke="#ddd" strokeWidth="1.500" /><circle cx="11" cy="8" r="3.500" fill="#51684a" /><circle cx="11" cy="8" r="1.200" fill="#bcd9a0" /></svg>
        </Task>
        <Task aria-label="Opera"><svg width="24" height="24" viewBox="0 0 24 24"><circle cx="12" cy="12" r="11.5" fill="#ef1d2e" /><ellipse cx="12" cy="12" rx="4.500" ry="8.500" fill="#080a12" /></svg></Task>
        <Task $bg="#23292e" $line="100%" aria-label="Chrome">
          <svg width="24" height="24" viewBox="0 0 24 24"><circle cx="12" cy="12" r="11" fill="#fbc92f" /><path d="M2.5 6.500A11 11 0 0 0 11 23l5-9-4-2Z" fill="#2f9e4f" /><path d="M2.5 6.500A11 11 0 0 1 22 7H12L8 14Z" fill="#e04637" /><circle cx="12" cy="12" r="5" fill="#4285f4" stroke="#fff" strokeWidth="1.5" /></svg>
        </Task>
        <Task aria-label="Telegram"><svg width="22" height="22" viewBox="0 0 22 22"><circle cx="11" cy="11" r="11" fill="#2fa3dc" /><path d="M4 11 17 5l-2 12-4-3-2 2-1-4Z" fill="#fff" /></svg></Task>
        <Task $bg="#3c4044" $line="100%" aria-label="EAGLE"><svg width="17" height="25" viewBox="0 0 17 25"><path d="M1 0h15v6H8v4h7v5H8v4h8v6H1l1-12Z" fill="#d1802c" /><path d="M1 0l7 6v4l5 2-5 3v4l-7 6 1-12Z" fill="#a8601c" /></svg></Task>
        <Spring />
        <Task $w={48} aria-label="People"><svg width="16" height="16" viewBox="0 0 16 16" fill="none" stroke="#fff" strokeWidth="1.2"><circle cx="5" cy="8" r="2.5" /><path d="M1 15q0-4 4-4t4 4" /><circle cx="11" cy="3.500" r="2.5" /><path d="M9 7.500q5-2 6 3" /></svg></Task>
        <Task $w={24} aria-label="Hidden icons"><svg width="12" height="8" viewBox="0 0 12 8"><path d="m1 7 5-5 5 5" fill="none" stroke="#fff" strokeWidth="1.3" /></svg></Task>
        <Task $w={25} aria-label="Wi-Fi"><svg width="13" height="13" viewBox="0 0 13 13" fill="none" stroke="#ddd"><path d="M1 12Q1 1 12 1M4 12q0-8 8-8M7 12q0-5 5-5M10 12q0-2 2-2" /></svg></Task>
        <Task $w={23} aria-label="Battery"><svg width="16" height="13" viewBox="0 0 16 13" fill="none" stroke="#fff"><path d="M7 3.500h7.500v7h-9V8M1.500 3v2q2 2.500 4 0V3ZM2.500 0v3M4.500 0v3M3.500 7v4h2" /></svg></Task>
        <Task $w={23} aria-label="Volume"><svg width="16" height="13" viewBox="0 0 16 13" fill="none" stroke="#fff"><path d="M.5 4.500h3l3.500-4v12l-3.500-4h-3ZM9.500 4q1.500 2.500 0 5" /><path d="M11.500 2q3 4.500 0 9M13.500 1q4 5.500 0 11" stroke="#777" /></svg></Task>
        <Task $w={38}>ENG</Task>
        <Clock>3:55 AM<br />3/9/2020</Clock>
        <Task $w={44} aria-label="Notifications"><svg width="16" height="16" viewBox="0 0 16 16"><path d="M.5 1.500h15v10H10L8 14.500 6 11.500H.5Z" fill="none" stroke="#fff" /></svg></Task>
        <Task $w={6} aria-label="Notification space" />
        <DesktopEdge />
      </TaskBar>
    </Shell>
  );
}
